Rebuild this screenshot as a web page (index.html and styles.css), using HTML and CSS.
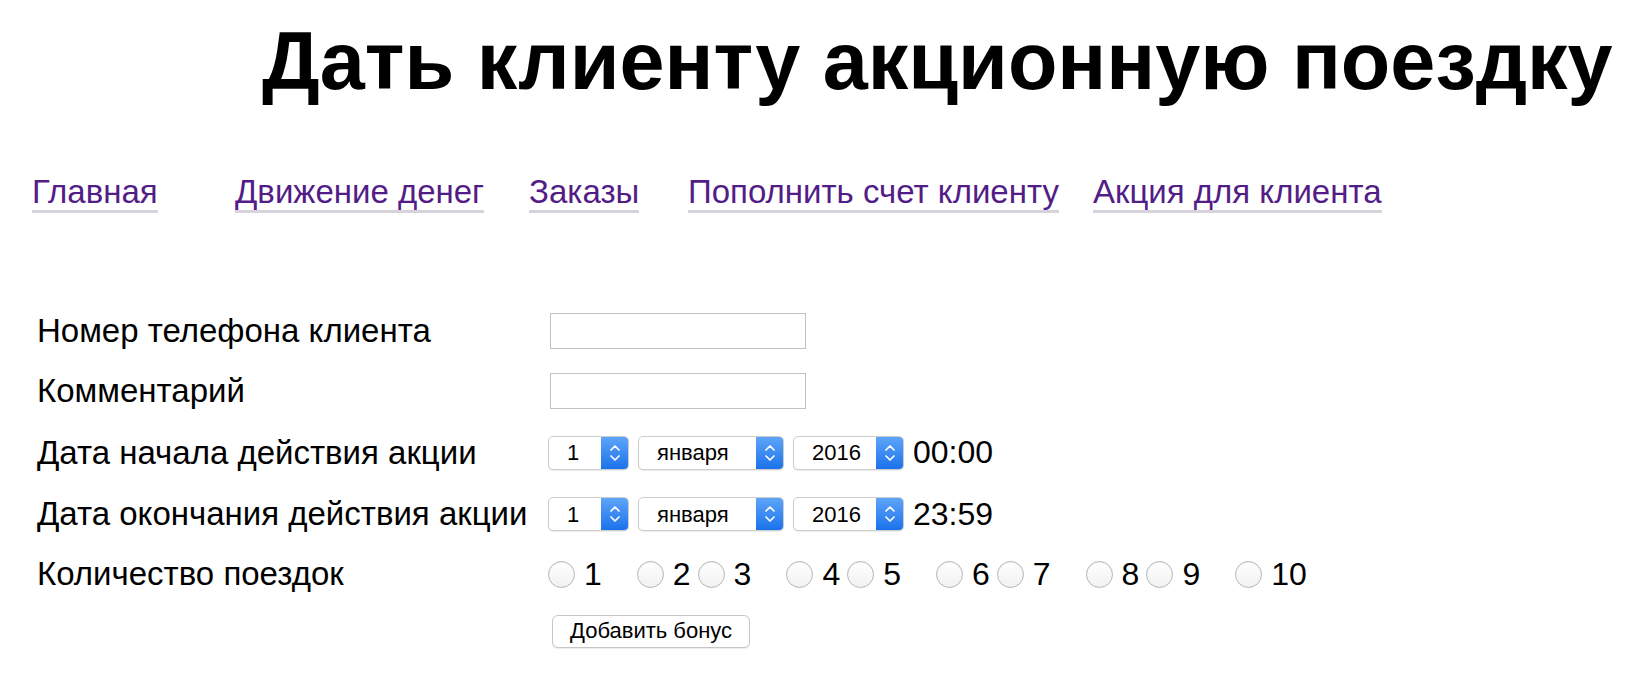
FILE: index.html
```html
<!DOCTYPE html>
<html lang="ru">
<head>
<meta charset="utf-8">
<title>Дать клиенту акционную поездку</title>
<link rel="stylesheet" href="styles.css">
</head>
<body>
<h1 class="title">Дать клиенту акционную поездку</h1>
<nav class="nav">
  <a class="nav-link" href="#">Главная</a>
  <a class="nav-link" href="#">Движение денег</a>
  <a class="nav-link" href="#">Заказы</a>
  <a class="nav-link" href="#">Пополнить счет клиенту</a>
  <a class="nav-link" href="#">Акция для клиента</a>
</nav>
<form class="form">
  <label class="field-label" for="phone">Номер телефона клиента</label>
  <div class="field"><input class="text-input" id="phone" type="text"></div>

  <label class="field-label" for="comment">Комментарий</label>
  <div class="field"><input class="text-input" id="comment" type="text"></div>

  <span class="field-label">Дата начала действия акции</span>
  <div class="field date-row">
    <span class="sel sel-day"><select><option>1</option><option>2</option><option>3</option></select><span class="sel-arrow"><svg width="10" height="16" viewBox="0 0 10 16"><path d="M1 5 L5 1 L9 5 M1 11 L5 15 L9 11" fill="none" stroke="#fff" stroke-width="1.7" stroke-linecap="round" stroke-linejoin="round"/></svg></span></span>
    <span class="sel sel-month"><select><option>января</option><option>февраля</option><option>марта</option></select><span class="sel-arrow"><svg width="10" height="16" viewBox="0 0 10 16"><path d="M1 5 L5 1 L9 5 M1 11 L5 15 L9 11" fill="none" stroke="#fff" stroke-width="1.7" stroke-linecap="round" stroke-linejoin="round"/></svg></span></span>
    <span class="sel sel-year"><select><option>2016</option><option>2017</option></select><span class="sel-arrow"><svg width="10" height="16" viewBox="0 0 10 16"><path d="M1 5 L5 1 L9 5 M1 11 L5 15 L9 11" fill="none" stroke="#fff" stroke-width="1.7" stroke-linecap="round" stroke-linejoin="round"/></svg></span></span>
    <span class="time">00:00</span>
  </div>

  <span class="field-label">Дата окончания действия акции</span>
  <div class="field date-row">
    <span class="sel sel-day"><select><option>1</option><option>2</option><option>3</option></select><span class="sel-arrow"><svg width="10" height="16" viewBox="0 0 10 16"><path d="M1 5 L5 1 L9 5 M1 11 L5 15 L9 11" fill="none" stroke="#fff" stroke-width="1.7" stroke-linecap="round" stroke-linejoin="round"/></svg></span></span>
    <span class="sel sel-month"><select><option>января</option><option>февраля</option><option>марта</option></select><span class="sel-arrow"><svg width="10" height="16" viewBox="0 0 10 16"><path d="M1 5 L5 1 L9 5 M1 11 L5 15 L9 11" fill="none" stroke="#fff" stroke-width="1.7" stroke-linecap="round" stroke-linejoin="round"/></svg></span></span>
    <span class="sel sel-year"><select><option>2016</option><option>2017</option></select><span class="sel-arrow"><svg width="10" height="16" viewBox="0 0 10 16"><path d="M1 5 L5 1 L9 5 M1 11 L5 15 L9 11" fill="none" stroke="#fff" stroke-width="1.7" stroke-linecap="round" stroke-linejoin="round"/></svg></span></span>
    <span class="time">23:59</span>
  </div>

  <span class="field-label">Количество поездок</span>
  <div class="field options">
    <label class="opt"><input class="radio" type="radio" name="trips" value="1"><span>1</span></label>
    <label class="opt"><input class="radio" type="radio" name="trips" value="2"><span>2</span></label>
    <label class="opt"><input class="radio" type="radio" name="trips" value="3"><span>3</span></label>
    <label class="opt"><input class="radio" type="radio" name="trips" value="4"><span>4</span></label>
    <label class="opt"><input class="radio" type="radio" name="trips" value="5"><span>5</span></label>
    <label class="opt"><input class="radio" type="radio" name="trips" value="6"><span>6</span></label>
    <label class="opt"><input class="radio" type="radio" name="trips" value="7"><span>7</span></label>
    <label class="opt"><input class="radio" type="radio" name="trips" value="8"><span>8</span></label>
    <label class="opt"><input class="radio" type="radio" name="trips" value="9"><span>9</span></label>
    <label class="opt"><input class="radio" type="radio" name="trips" value="10"><span>10</span></label>
  </div>

  <div class="field field-submit"><button class="submit" type="button">Добавить бонус</button></div>
</form>
</body>
</html>
```

FILE: styles.css
```css
body {
  margin: 0;
  font-family: "Liberation Sans", Arial, Helvetica, sans-serif;
  font-size: 33px;
  color: #000;
  background: #fff;
}

.title {
  margin: 0;
  padding: 15px 0 0 262px;
  font-size: 81px;
  font-weight: bold;
  line-height: 92px;
  white-space: nowrap;
}

.nav {
  display: grid;
  grid-template-columns: 203px 294px 159px 405px max-content;
  margin-top: 67px;
  padding-left: 32px;
}

.nav-link {
  justify-self: start;
  color: #531d87;
  text-decoration: none;
  line-height: 36px;
  border-bottom: 3px solid #d7d3dc;
}

.form {
  display: grid;
  grid-template-columns: 511px auto;
  grid-template-rows: 60px 60px 63px 60px 60px 54px;
  align-items: center;
  margin: 88px 0 0;
  padding-left: 37px;
}

.field-label {
  white-space: nowrap;
}

.field {
  display: flex;
  align-items: center;
}

.field-submit {
  grid-column: 2;
}

.text-input {
  width: 256px;
  height: 36px;
  box-sizing: border-box;
  margin: 0 0 0 2px;
  padding: 0 6px;
  border: 1px solid #c2c2c2;
  border-radius: 0;
  font-family: inherit;
  font-size: 22px;
  outline: none;
  background: #fff;
}

.date-row {
  gap: 9px;
}

.sel {
  display: inline-flex;
  height: 34px;
  box-sizing: border-box;
  border: 1px solid #cdcdcd;
  border-radius: 5px;
  overflow: hidden;
  background: #fff;
  box-shadow: 0 1px 1px rgba(0, 0, 0, 0.08);
}

.sel select {
  -webkit-appearance: none;
  appearance: none;
  flex: 1;
  min-width: 0;
  height: 100%;
  margin: 0;
  padding: 0 0 0 18px;
  border: 0;
  background: transparent;
  font-family: inherit;
  font-size: 22px;
  color: #000;
  outline: none;
}

.sel-day { width: 81px; }
.sel-month { width: 146px; }
.sel-year { width: 111px; }

.sel-arrow {
  width: 27px;
  flex: none;
  display: flex;
  align-items: center;
  justify-content: center;
  background: linear-gradient(#5ea5f9, #1b72ea);
}

.time {
  font-size: 32px;
}

.options {
  display: flex;
  font-size: 32px;
}

.opt {
  display: inline-flex;
  align-items: center;
  gap: 9px;
}

.opt:nth-child(odd) { margin-right: 35px; }
.opt:nth-child(even) { margin-right: 7px; }

.radio {
  -webkit-appearance: none;
  appearance: none;
  width: 27px;
  height: 27px;
  margin: 0;
  border: 1px solid #b5b5b5;
  border-radius: 50%;
  background: linear-gradient(#ffffff, #f1f1f1);
  box-shadow: inset 0 1px 1px rgba(0, 0, 0, 0.05);
}

.submit {
  margin-left: 4px;
  height: 33px;
  padding: 0 17px;
  border: 1px solid #c6c6c6;
  border-radius: 6px;
  background: #fff;
  box-shadow: 0 1px 1px rgba(0, 0, 0, 0.08);
  font-family: inherit;
  font-size: 22px;
  color: #000;
}
```
